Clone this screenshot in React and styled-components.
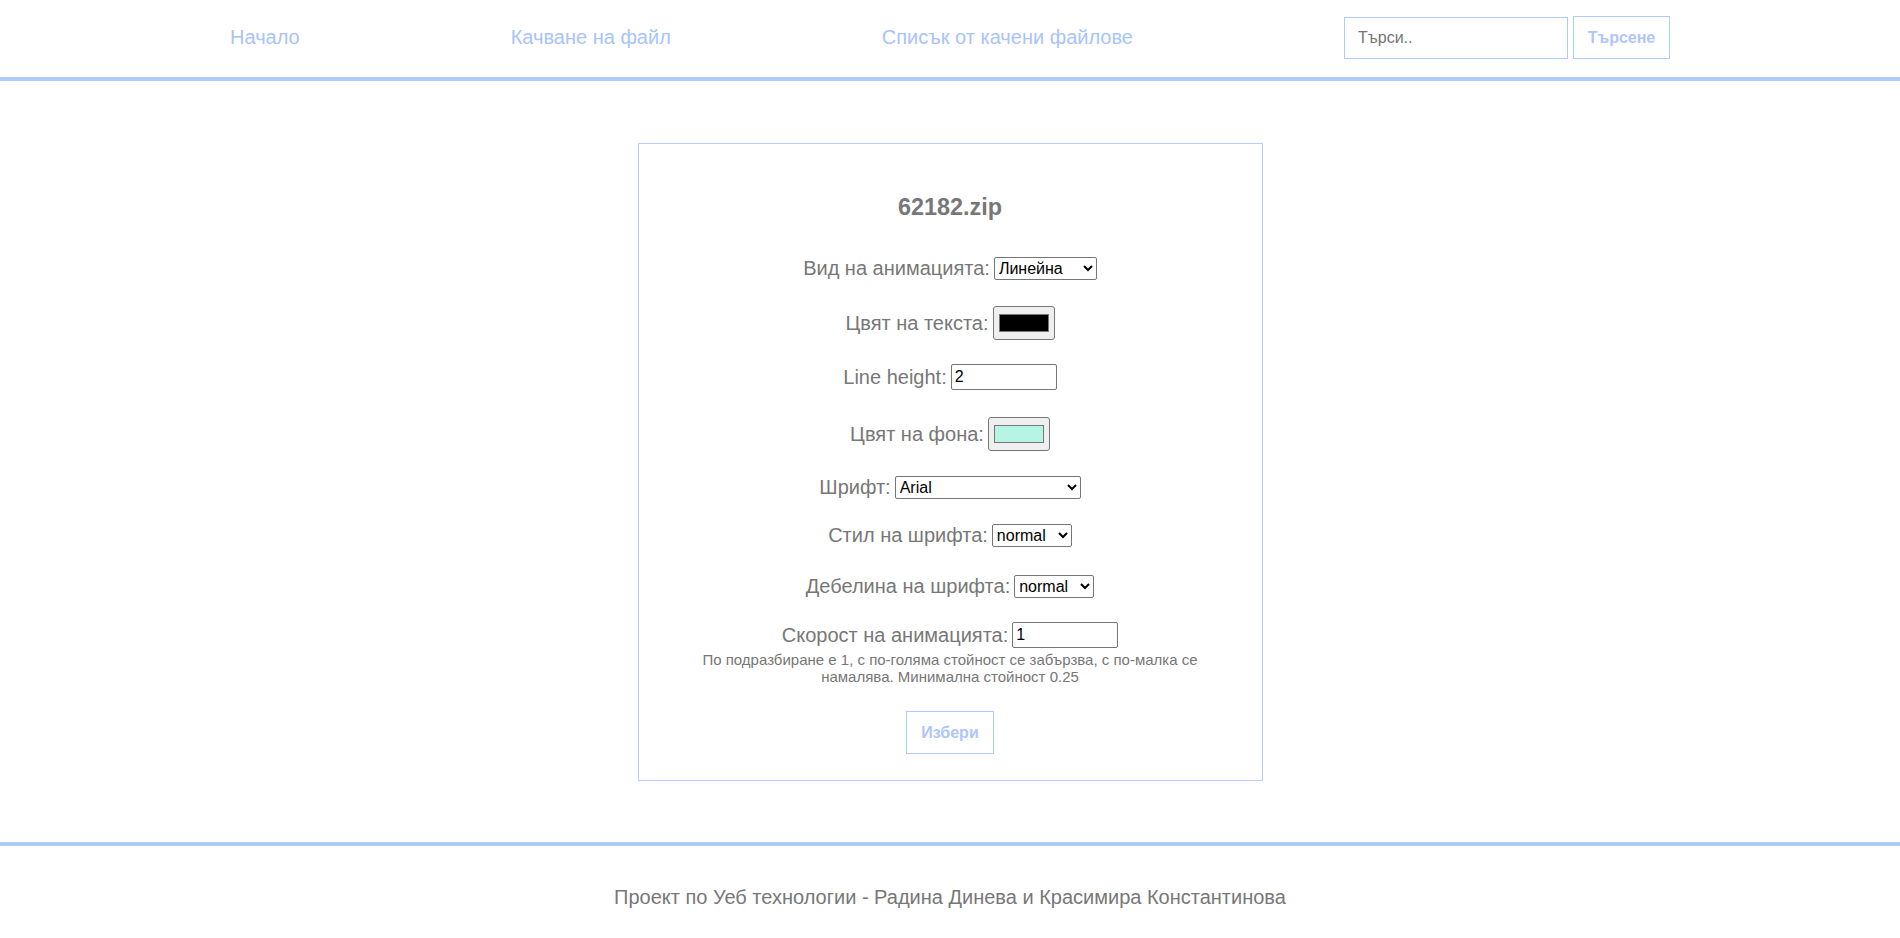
import React from 'react';
import styled, { createGlobalStyle } from 'styled-components';

const GlobalStyle = createGlobalStyle`
  html, body {
    margin: 0;
    padding: 0;
    background: #ffffff;
    font-family: "Liberation Sans", Arial, sans-serif;
  }
`;

const fonts = ['Arial', 'Times New Roman', 'Courier New', 'Verdana', 'Georgia'];

function App() {
  return (
    <Page>
      <GlobalStyle />
      <Header>
        <NavLink href="#">Начало</NavLink>
        <NavLink href="#">Качване на файл</NavLink>
        <NavLink href="#">Списък от качени файлове</NavLink>
        <SearchForm onSubmit={(e) => e.preventDefault()}>
          <SearchInput placeholder="Търси.." />
          <OutlineButton $w="97px">Търсене</OutlineButton>
        </SearchForm>
      </Header>

      <Main>
        <Card>
          <Title>62182.zip</Title>
          <Form onSubmit={(e) => e.preventDefault()}>
            <Row>
              <Label>Вид на анимацията:</Label>
              <Select $w="103px" defaultValue="linear">
                <option value="linear">Линейна</option>
                <option value="ease">Плавна</option>
              </Select>
            </Row>
            <Row>
              <Label>Цвят на текста:</Label>
              <ColorInput defaultValue="#000000" />
            </Row>
            <Row $shift="-2px">
              <Label>Line height:</Label>
              <TextInput defaultValue="2" />
            </Row>
            <Row $shift="1px">
              <Label>Цвят на фона:</Label>
              <ColorInput defaultValue="#b6f5e4" />
            </Row>
            <Row $shift="-1px">
              <Label>Шрифт:</Label>
              <Select $w="186px" defaultValue="Arial">
                {fonts.map((f) => (
                  <option key={f} value={f}>
                    {f}
                  </option>
                ))}
              </Select>
            </Row>
            <Row $shift="-1px">
              <Label>Стил на шрифта:</Label>
              <Select $w="80px" defaultValue="normal">
                <option value="normal">normal</option>
                <option value="italic">italic</option>
              </Select>
            </Row>
            <Row $shift="2px">
              <Label>Дебелина на шрифта:</Label>
              <Select $w="80px" defaultValue="normal">
                <option value="normal">normal</option>
                <option value="bold">bold</option>
              </Select>
            </Row>
            <Group>
              <Row>
                <Label>Скорост на анимацията:</Label>
                <TextInput defaultValue="1" />
              </Row>
              <Note>
                По подразбиране е 1, с по-голяма стойност се забързва, с по-малка се
                намалява. Минимална стойност 0.25
              </Note>
            </Group>
            <OutlineButton $w="88px">Избери</OutlineButton>
          </Form>
        </Card>
      </Main>

      <Footer>Проект по Уеб технологии - Радина Динева и Красимира Константинова</Footer>
    </Page>
  );
}

export default App;

const Page = styled.div`
  display: flex;
  flex-direction: column;
  min-height: 100vh;
`;

const Header = styled.header`
  height: 81px;
  box-sizing: border-box;
  display: flex;
  align-items: center;
  justify-content: center;
  gap: 211px;
  border-bottom: 4px solid #aecbfa;
  padding-bottom: 2px;
`;

const NavLink = styled.a`
  font-size: 20px;
  color: #a9c3fb;
  text-decoration: none;
`;

const SearchForm = styled.form`
  display: flex;
  align-items: center;
  gap: 5px;
`;

const SearchInput = styled.input`
  width: 224px;
  height: 42px;
  box-sizing: border-box;
  border: 1px solid #aecbfa;
  padding: 0 13px;
  font-family: "Liberation Sans", Arial, sans-serif;
  font-size: 16px;
  outline: none;

  ::placeholder {
    color: #757575;
  }
`;

const OutlineButton = styled.button`
  width: ${(p) => p.$w};
  height: 43px;
  box-sizing: border-box;
  background: #ffffff;
  border: 1px solid #aecbfa;
  color: #aec6fb;
  font-family: "Liberation Sans", Arial, sans-serif;
  font-size: 16px;
  font-weight: bold;
  cursor: pointer;
  padding: 0;
`;

const Main = styled.main`
  flex: 1;
  display: flex;
  justify-content: center;
  padding: 62px 0 61px;
`;

const Card = styled.div`
  width: 625px;
  box-sizing: border-box;
  border: 1px solid #b8cdfa;
  padding: 50px 60px 26px;
  display: flex;
  flex-direction: column;
  align-items: center;
  color: #777777;
`;

const Title = styled.h3`
  margin: 0 0 36px;
  font-size: 23.4px;
  font-weight: bold;
  color: #777777;
`;

const Form = styled.form`
  display: flex;
  flex-direction: column;
  align-items: center;
  gap: 26px;
  width: 100%;
`;

const Group = styled.div`
  display: flex;
  flex-direction: column;
  align-items: center;
  gap: 3px;
  margin-top: -2px;
`;

const Row = styled.div`
  display: flex;
  align-items: center;
  justify-content: center;
  gap: 4px;
  margin-top: ${(p) => p.$shift || '0'};
`;

const Label = styled.label`
  font-size: 20px;
  line-height: 23px;
  color: #777777;
`;

const Select = styled.select`
  width: ${(p) => p.$w};
  height: 23px;
  font-family: "Liberation Sans", Arial, sans-serif;
  font-size: 16px;
  color: #000000;
  background: #ffffff;
  border: 1px solid #767676;
  border-radius: 2px;
`;

const TextInput = styled.input`
  width: 106px;
  height: 26px;
  box-sizing: border-box;
  font-family: "Liberation Sans", Arial, sans-serif;
  font-size: 16px;
  color: #000000;
  padding: 1px 3px;
  border: 1px solid #767676;
  border-radius: 2px;
`;

const ColorInput = styled.input.attrs({ type: 'color' })`
  width: 62px;
  height: 34px;
  box-sizing: border-box;
  padding: 0;
  border: 1px solid #767676;
  border-radius: 3px;
  background: #efefef;
  cursor: pointer;

  &::-webkit-color-swatch-wrapper {
    padding: 7px 5px;
  }
  &::-webkit-color-swatch {
    border: 1px solid #777777;
    border-radius: 0;
  }
`;

const Note = styled.p`
  margin: 0;
  font-size: 15px;
  line-height: 17px;
  text-align: center;
  color: #777777;
`;

const Footer = styled.footer`
  border-top: 4px solid #aecbfa;
  padding: 40px 0 41px;
  text-align: center;
  font-size: 20px;
  line-height: 23px;
  color: #777777;
`;
